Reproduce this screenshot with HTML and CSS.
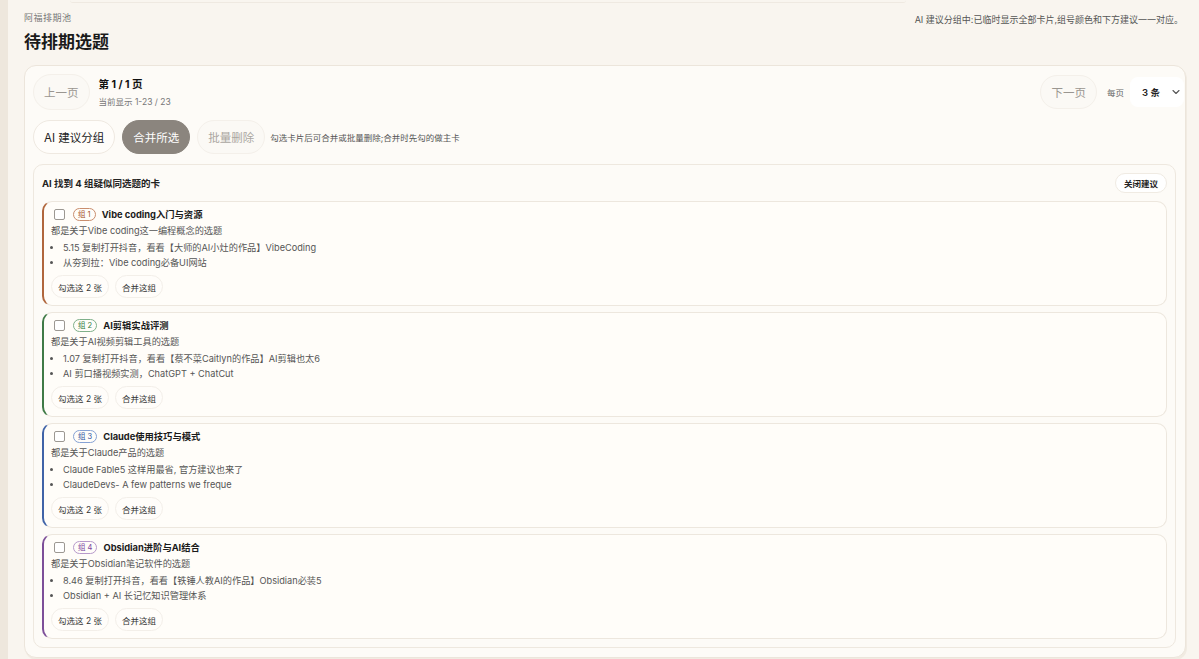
FILE: index.html
```html
<!DOCTYPE html>
<html lang="zh-CN">
<head>
    <meta charset="utf-8">
    <title>待排期选题</title>
    <link rel="stylesheet" href="styles.css">
</head>
<body>
    <div class="side-strip"></div>
    <div class="main">
        <div class="top-edge"></div>
        <div class="page-head">
            <div>
                <div class="crumb">阿福排期池</div>
                <h1>待排期选题</h1>
            </div>
            <div class="head-note">AI 建议分组中:已临时显示全部卡片,组号颜色和下方建议一一对应。</div>
        </div>

        <div class="panel">
            <div class="pager">
                <div class="pager-left">
                    <button class="pill pill-muted">上一页</button>
                    <div class="page-info">
                        <div class="page-num">第 1 / 1 页</div>
                        <div class="page-range">当前显示 1-23 / 23</div>
                    </div>
                </div>
                <div class="pager-right">
                    <button class="pill pill-muted">下一页</button>
                    <span class="per-page">每页</span>
                    <div class="select">
                        <span>3 条</span>
                        <svg width="10" height="10" viewBox="0 0 10 10"><path d="M2 3.5 L5 6.5 L8 3.5" fill="none" stroke="#555" stroke-width="1.1" stroke-linecap="round" stroke-linejoin="round"/></svg>
                    </div>
                </div>
            </div>

            <div class="toolbar">
                <button class="pill pill-strong">AI 建议分组</button>
                <button class="pill pill-filled">合并所选</button>
                <button class="pill pill-faint">批量删除</button>
                <span class="tool-hint">勾选卡片后可合并或批量删除;合并时先勾的做主卡</span>
            </div>

            <div class="suggest">
                <div class="suggest-head">
                    <span>AI 找到 4 组疑似同选题的卡</span>
                    <button class="close-btn">关闭建议</button>
                </div>

                <div class="group g1">
                    <div class="group-title">
                        <span class="check"></span>
                        <span class="badge">组 1</span>
                        <b>Vibe coding入门与资源</b>
                    </div>
                    <div class="group-desc">都是关于Vibe coding这一编程概念的选题</div>
                    <ul>
                        <li>5.15 复制打开抖音，看看【大师的AI小灶的作品】VibeCoding</li>
                        <li>从夯到拉：Vibe coding必备UI网站</li>
                    </ul>
                    <div class="group-actions">
                        <button class="mini">勾选这 2 张</button>
                        <button class="mini">合并这组</button>
                    </div>
                </div>

                <div class="group g2">
                    <div class="group-title">
                        <span class="check"></span>
                        <span class="badge">组 2</span>
                        <b>AI剪辑实战评测</b>
                    </div>
                    <div class="group-desc">都是关于AI视频剪辑工具的选题</div>
                    <ul>
                        <li>1.07 复制打开抖音，看看【蔡不菜Caitlyn的作品】AI剪辑也太6</li>
                        <li>AI 剪口播视频实测，ChatGPT + ChatCut</li>
                    </ul>
                    <div class="group-actions">
                        <button class="mini">勾选这 2 张</button>
                        <button class="mini">合并这组</button>
                    </div>
                </div>

                <div class="group g3">
                    <div class="group-title">
                        <span class="check"></span>
                        <span class="badge">组 3</span>
                        <b>Claude使用技巧与模式</b>
                    </div>
                    <div class="group-desc">都是关于Claude产品的选题</div>
                    <ul>
                        <li>Claude Fable5 这样用最省, 官方建议也来了</li>
                        <li>ClaudeDevs- A few patterns we freque</li>
                    </ul>
                    <div class="group-actions">
                        <button class="mini">勾选这 2 张</button>
                        <button class="mini">合并这组</button>
                    </div>
                </div>

                <div class="group g4">
                    <div class="group-title">
                        <span class="check"></span>
                        <span class="badge">组 4</span>
                        <b>Obsidian进阶与AI结合</b>
                    </div>
                    <div class="group-desc">都是关于Obsidian笔记软件的选题</div>
                    <ul>
                        <li>8.46 复制打开抖音，看看【铁锤人教AI的作品】Obsidian必装5</li>
                        <li>Obsidian + AI 长记忆知识管理体系</li>
                    </ul>
                    <div class="group-actions">
                        <button class="mini">勾选这 2 张</button>
                        <button class="mini">合并这组</button>
                    </div>
                </div>
            </div>
        </div>
    </div>
</body>
</html>
```

FILE: styles.css
```css
* {
    box-sizing: border-box;
}

html, body {
    height: 100%;
}

body {
    margin: 0;
    display: flex;
    background: #f9f5ef;
    color: #222;
    font-family: "Inter", "Noto Sans CJK SC", sans-serif;
    overflow: hidden;
}

button {
    font-family: inherit;
    cursor: pointer;
}

.side-strip {
    width: 8px;
    flex-shrink: 0;
    background: #eee7dd;
}

.main {
    flex: 1;
    padding: 0 13px 0 16px;
    min-width: 0;
}

.top-edge {
    height: 3px;
    margin: 0 280px 0 46px;
    border-bottom: 1px solid #efe9e1;
    border-radius: 0 0 6px 6px;
}

/* page title */
.page-head {
    display: flex;
    justify-content: space-between;
    align-items: flex-start;
    padding-top: 9px;
    height: 62px;
}

.crumb {
    font-size: 9px;
    color: #777;
    letter-spacing: 0.5px;
    line-height: 12px;
}

h1 {
    margin: 7px 0 0;
    font-size: 17px;
    font-weight: 700;
    line-height: 22px;
    color: #1a1a1a;
}

.head-note {
    font-size: 9px;
    color: #555;
    margin-top: 1px;
    margin-right: 3px;
}

/* main panel */
.panel {
    background: #fdfbf7;
    border: 1px solid #ece5db;
    border-radius: 12px;
    padding: 7px 9px 9px 8px;
    box-shadow: 1px 2px 0 #f1ebe2;
}

.pager {
    display: flex;
    justify-content: space-between;
    align-items: center;
    height: 38px;
    margin-right: -8px;
}

.pager-left, .pager-right {
    display: flex;
    align-items: center;
}

.pill {
    border-radius: 18px;
    border: 1px solid #f4f0ea;
    background: #fbf9f5;
    height: 36px;
    padding: 0 10px;
    font-size: 11.5px;
}

.pill-muted {
    color: #9a9690;
}

.page-info {
    margin-left: 9px;
}

.page-num {
    font-size: 10.5px;
    font-weight: 700;
    color: #111;
    line-height: 14px;
}

.page-range {
    font-size: 8.5px;
    color: #777;
    margin-top: 3px;
}

.pager-right .pill {
    height: 34px;
}

.per-page {
    font-size: 8.5px;
    color: #666;
    margin: 0 6px 0 10px;
}

.select {
    display: flex;
    align-items: center;
    justify-content: space-between;
    width: 54px;
    height: 30px;
    padding: 0 3px 0 12px;
    background: #fff;
    border-radius: 8px;
    font-size: 9.5px;
    font-weight: 600;
    color: #222;
}

.toolbar {
    display: flex;
    align-items: center;
    gap: 7px;
    margin-top: 8px;
    height: 36px;
}

.toolbar .pill {
    height: 34px;
    font-size: 11.5px;
    padding: 0 10px;
}

.pill-strong {
    color: #222;
    background: #fffdfa;
    border-color: #efe9e1;
}

.pill-filled {
    background: #8b857e;
    border-color: #8b857e;
    color: #fff;
}

.pill-faint {
    color: #aaa6a0;
}

.tool-hint {
    font-size: 8.5px;
    color: #555;
    margin-left: -2px;
}

/* AI suggestion box */
.suggest {
    margin-top: 9px;
    border: 1px solid #eee8df;
    border-radius: 10px;
    padding: 7px 8px 8px;
    background: #fdfbf7;
}

.suggest-head {
    display: flex;
    justify-content: space-between;
    align-items: center;
    height: 22px;
    font-size: 9.5px;
    font-weight: 700;
    color: #222;
    margin-bottom: 7px;
}

.close-btn {
    height: 20px;
    padding: 0 8px;
    border-radius: 10px;
    border: 1px solid #f0ebe3;
    background: #fff;
    font-size: 8.5px;
    font-weight: 700;
    color: #222;
}

.group {
    background: #fffdf9;
    border: 1px solid #ede7de;
    border-left: 2px solid #b0663c;
    border-radius: 10px;
    padding: 5px 10px 7px 7px;
    height: 105px;
    margin-bottom: 6px;
}

.group:last-child {
    margin-bottom: 0;
}

.group-title {
    display: flex;
    align-items: center;
    height: 14px;
}

.check {
    width: 11px;
    height: 11px;
    border: 1px solid #9c9892;
    border-radius: 2px;
    background: #fff;
    margin-left: 3px;
}

.badge {
    margin-left: 8px;
    border: 1px solid #c98e6e;
    color: #a5522e;
    border-radius: 8px;
    font-size: 7.5px;
    padding: 0 4px;
    line-height: 11px;
}

.group-title b {
    font-size: 9.3px;
    margin-left: 6px;
    color: #1a1a1a;
}

.group-desc {
    font-size: 9.2px;
    color: #555;
    margin-top: 3px;
    line-height: 14px;
}

.group ul {
    margin: 2px 0 0;
    padding-left: 12px;
    font-size: 9.2px;
    color: #555;
    line-height: 15px;
}

.group-actions {
    display: flex;
    gap: 6px;
    margin-top: 5px;
}

.mini {
    height: 23px;
    border-radius: 12px;
    border: 1px solid #f3efe9;
    background: #fffdfa;
    font-size: 8.5px;
    color: #333;
    padding: 0 6px;
}

.g2 { border-left-color: #3f7a46; }
.g2 .badge { border-color: #7fb08a; color: #2f7a40; }

.g3 { border-left-color: #3f63a8; }
.g3 .badge { border-color: #86a2d4; color: #2f56a2; }

.g4 { border-left-color: #7d4f99; }
.g4 .badge { border-color: #b79acb; color: #7a46a0; }
```
